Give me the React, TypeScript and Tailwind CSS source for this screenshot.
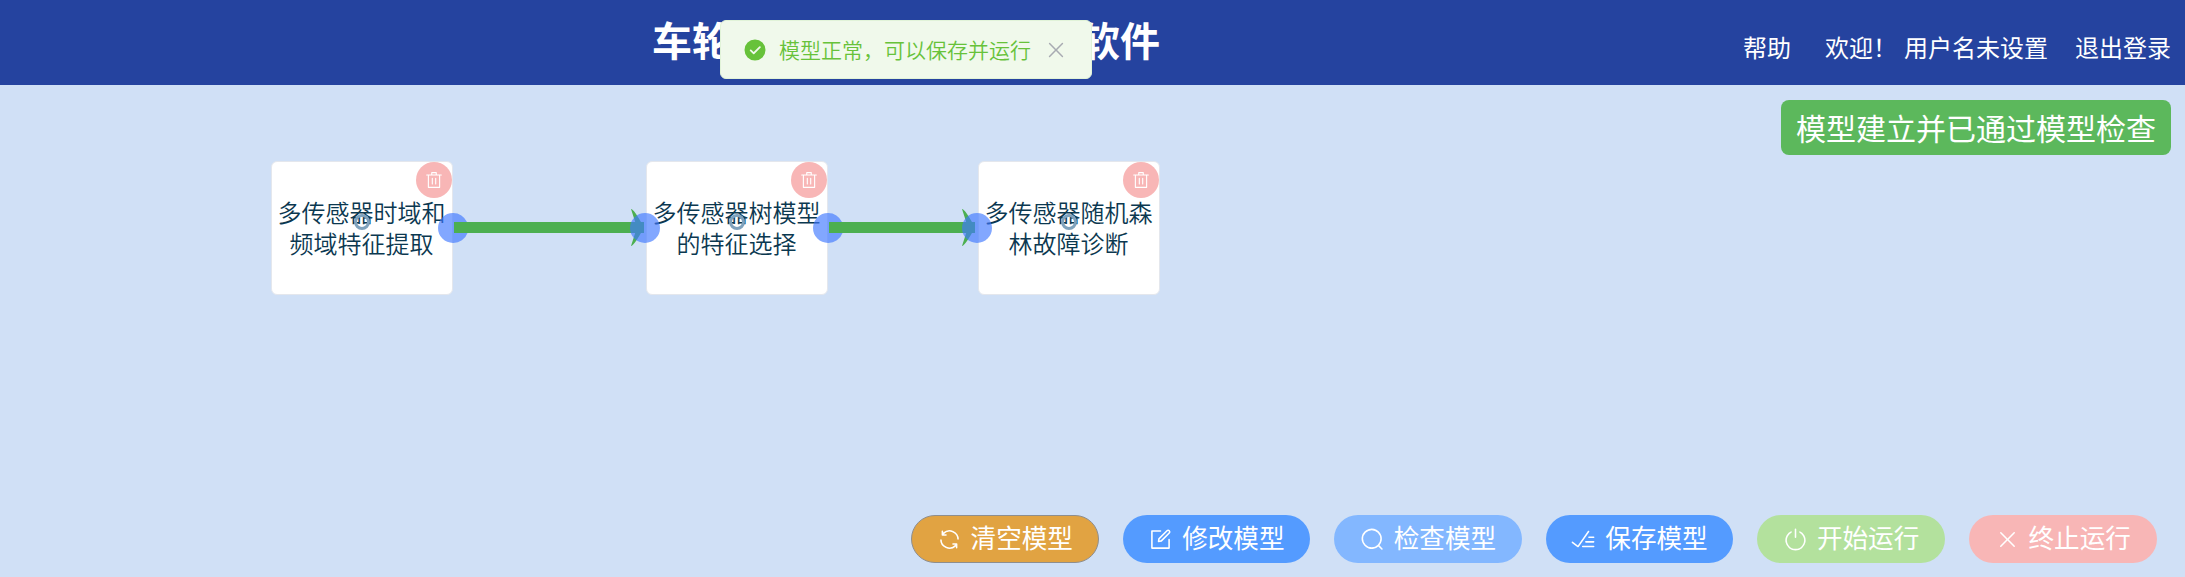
const CJK = "font-['Noto_Sans_CJK_SC','Liberation_Sans',sans-serif]";

const paths = {
  close:
    'M764.288 214.592 512 466.88 259.712 214.592a31.936 31.936 0 0 0-45.12 45.12L466.752 512 214.528 764.224a31.936 31.936 0 1 0 45.12 45.184L512 557.184l252.288 252.288a31.936 31.936 0 0 0 45.12-45.12L557.12 512.064l252.288-252.352a31.936 31.936 0 1 0-45.12-45.184z',
  refresh:
    'M771.776 794.88A384 384 0 0 1 128 512h64a320 320 0 0 0 555.712 216.448H654.72a32 32 0 1 1 0-64h149.056a32 32 0 0 1 32 32v148.928a32 32 0 1 1-64 0v-50.56zM276.288 295.616h92.992a32 32 0 0 1 0 64H220.16a32 32 0 0 1-32-32V178.56a32 32 0 0 1 64 0v50.56A384 384 0 0 1 896.128 512h-64a320 320 0 0 0-555.776-216.384z',
  edit:
    'M832 512a32 32 0 1 1 64 0v352a32 32 0 0 1-32 32H160a32 32 0 0 1-32-32V160a32 32 0 0 1 32-32h352a32 32 0 0 1 0 64H192v640h640zM469.952 554.24l52.8-7.552L847.104 222.4a32 32 0 1 0-45.248-45.248L477.44 501.44l-7.552 52.8zm422.4-422.4a96 96 0 0 1 0 135.808l-331.84 331.84a32 32 0 0 1-18.112 9.088L436.8 623.68a32 32 0 0 1-36.224-36.224l15.104-105.6a32 32 0 0 1 9.024-18.112l331.904-331.84a96 96 0 0 1 135.744 0z',
  search:
    'm795.904 750.72 124.992 124.928a32 32 0 0 1-45.248 45.248L750.656 795.904a416 416 0 1 1 45.248-45.248zM480 832a352 352 0 1 0 0-704 352 352 0 0 0 0 704z',
  finished:
    'M280.768 753.728 691.456 167.04a32 32 0 1 1 52.416 36.672L314.24 817.472a32 32 0 0 1-45.44 7.296l-230.4-172.8a32 32 0 0 1 38.4-51.2l203.968 152.96zM736 448a32 32 0 1 1 0-64h192a32 32 0 1 1 0 64H736zM608 640a32 32 0 0 1 0-64h319.936a32 32 0 1 1 0 64H608zM480 832a32 32 0 1 1 0-64h447.936a32 32 0 1 1 0 64H480z',
  power:
    'M352 159.872V230.4a352 352 0 1 0 320 0v-70.528A416.128 416.128 0 0 1 512 960a416 416 0 0 1-160-800.128zM512 64q32 0 32 32v320q0 32-32 32t-32-32V96q0-32 32-32z',
  trash:
    'M160 256H96a32 32 0 0 1 0-64h256V95.936a32 32 0 0 1 32-32h256a32 32 0 0 1 32 32V192h256a32 32 0 1 1 0 64h-64v672a32 32 0 0 1-32 32H192a32 32 0 0 1-32-32V256zm448-64v-64H416v64h192zM224 896h576V256H224v640zm192-128a32 32 0 0 1-32-32V416a32 32 0 0 1 64 0v320a32 32 0 0 1-32 32zm192 0a32 32 0 0 1-32-32V416a32 32 0 0 1 64 0v320a32 32 0 0 1-32 32z',
  check:
    'M512 64a448 448 0 1 1 0 896 448 448 0 0 1 0-896zm-55.808 536.384-99.52-99.584a38.4 38.4 0 1 0-54.336 54.336l126.72 126.72a38.272 38.272 0 0 0 54.336 0l262.4-262.464a38.4 38.4 0 1 0-54.272-54.336L456.192 600.384z',
};

function Icon({ name, className }: { name: keyof typeof paths; className: string }) {
  return (
    <svg viewBox="0 0 1024 1024" fill="currentColor" className={`shrink-0 ${className}`}>
      <path d={paths[name]} />
    </svg>
  );
}

const nodes = [
  { lines: ['多传感器时域和', '频域特征提取'], place: 'left-[271px]' },
  { lines: ['多传感器树模型', '的特征选择'], place: 'left-[646px]' },
  { lines: ['多传感器随机森', '林故障诊断'], place: 'left-[978px]' },
];

const actions: { label: string; icon: keyof typeof paths; tone: string }[] = [
  { label: '清空模型', icon: 'refresh', tone: 'bg-[#e1a342] border border-[#8e8e8e]' },
  { label: '修改模型', icon: 'edit', tone: 'bg-[#549bff]' },
  { label: '检查模型', icon: 'search', tone: 'bg-[#83b7ff]' },
  { label: '保存模型', icon: 'finished', tone: 'bg-[#549bff]' },
  { label: '开始运行', icon: 'power', tone: 'bg-[#b3e19d]' },
  { label: '终止运行', icon: 'close', tone: 'bg-[#f8b6b6]' },
];

function FlowNode({ lines, place }: { lines: string[]; place: string }) {
  return (
    <div
      className={`absolute top-[76px] ${place} flex h-[134px] w-[182px] flex-col items-center justify-center rounded-md border border-[#e4e7ed] bg-white pr-px pb-[2px] text-[24px] leading-[31px] font-[350] text-[#0b3850]`}
    >
      {lines.map((l) => (
        <span key={l} className="whitespace-nowrap">
          {l}
        </span>
      ))}
      <span className="absolute top-[52px] left-[82px] size-4 rounded-full border-[3px] border-[#7fa2bd]" />
      <span className="absolute top-0 right-0 flex size-9 items-center justify-center rounded-full bg-[#f8b6b6] text-white">
        <Icon name="trash" className="size-[18px]" />
      </span>
    </div>
  );
}

export default function App() {
  return (
    <div className={`relative flex h-[577px] w-[2185px] flex-col overflow-hidden bg-[#d0e0f6] ${CJK}`}>
      <header className="flex h-[85px] shrink-0 items-start justify-end bg-[#25439f] pr-[14px] text-white">
        <h1 className="mr-[583px] flex h-[78px] w-[508px] items-center justify-between text-[40px] leading-none font-bold">
          <span>车轮</span>
          <span>软件</span>
        </h1>
        <nav className="flex h-[94px] items-center text-[24px] leading-none whitespace-nowrap">
          <span>帮助</span>
          <span className="ml-[34px]">欢迎！</span>
          <span className="ml-[7px]">用户名未设置</span>
          <span className="ml-[27px]">退出登录</span>
        </nav>
      </header>

      <main className="relative flex-1">
        {nodes.map((n) => (
          <FlowNode key={n.place} {...n} />
        ))}
        <svg className="absolute top-0 left-0 h-[300px] w-[1200px]" viewBox="0 85 1200 300">
          <g fill="#4caf50">
            <path d="M454 222H644V233H454zM631 209Q634 209 644 227.500Q634 246 631 246L637 227.500z" />
            <path d="M829 222H975V233H829zM962 209Q965 209 975 227.500Q965 246 962 246L968 227.500z" />
          </g>
          <g fill="#3f78ff" fillOpacity="0.65">
            <circle cx="645" cy="228" r="15" />
            <circle cx="977" cy="228" r="15" />
            <path d="M453 213a15 15 0 1 0 0 30a15 15 0 0 0 14.500-10H454V222H467a15 15 0 0 0-14-9z" />
            <path d="M828 213a15 15 0 1 0 0 30a15 15 0 0 0 14.500-10H829V222H842a15 15 0 0 0-14-9z" />
          </g>
        </svg>
        <div className="flex justify-end pt-[15px] pr-[14px]">
          <div className="flex h-[55px] w-[390px] items-center justify-center rounded-lg bg-[#5cb85c] text-[30px] leading-none whitespace-nowrap text-white">
            <span className="pb-px">模型建立并已通过模型检查</span>
          </div>
        </div>
      </main>

      <footer className="flex h-[62px] shrink-0 items-start justify-end gap-6 pr-[28.500px]">
        {actions.map((a) => (
          <button
            key={a.label}
            className={`flex h-12 w-[187.600px] items-center justify-center gap-[9px] rounded-full text-[25.600px] leading-none whitespace-nowrap text-white ${a.tone}`}
          >
            <Icon name={a.icon} className="size-[25px]" />
            <span className="pb-[4px]">{a.label}</span>
          </button>
        ))}
      </footer>

      <div className="absolute top-5 left-[720px] flex h-[59px] w-[372px] items-center rounded-md border border-[#e1f3d8] bg-[#f0f9eb] pl-[22px] text-[21px] leading-none font-[350] text-[#67c23a]">
        <Icon name="check" className="size-6" />
        <span className="ml-[12px] whitespace-nowrap">模型正常，可以保存并运行</span>
        <Icon name="close" className="ml-[13px] size-6 text-[#a8abb2]" />
      </div>
    </div>
  );
}
